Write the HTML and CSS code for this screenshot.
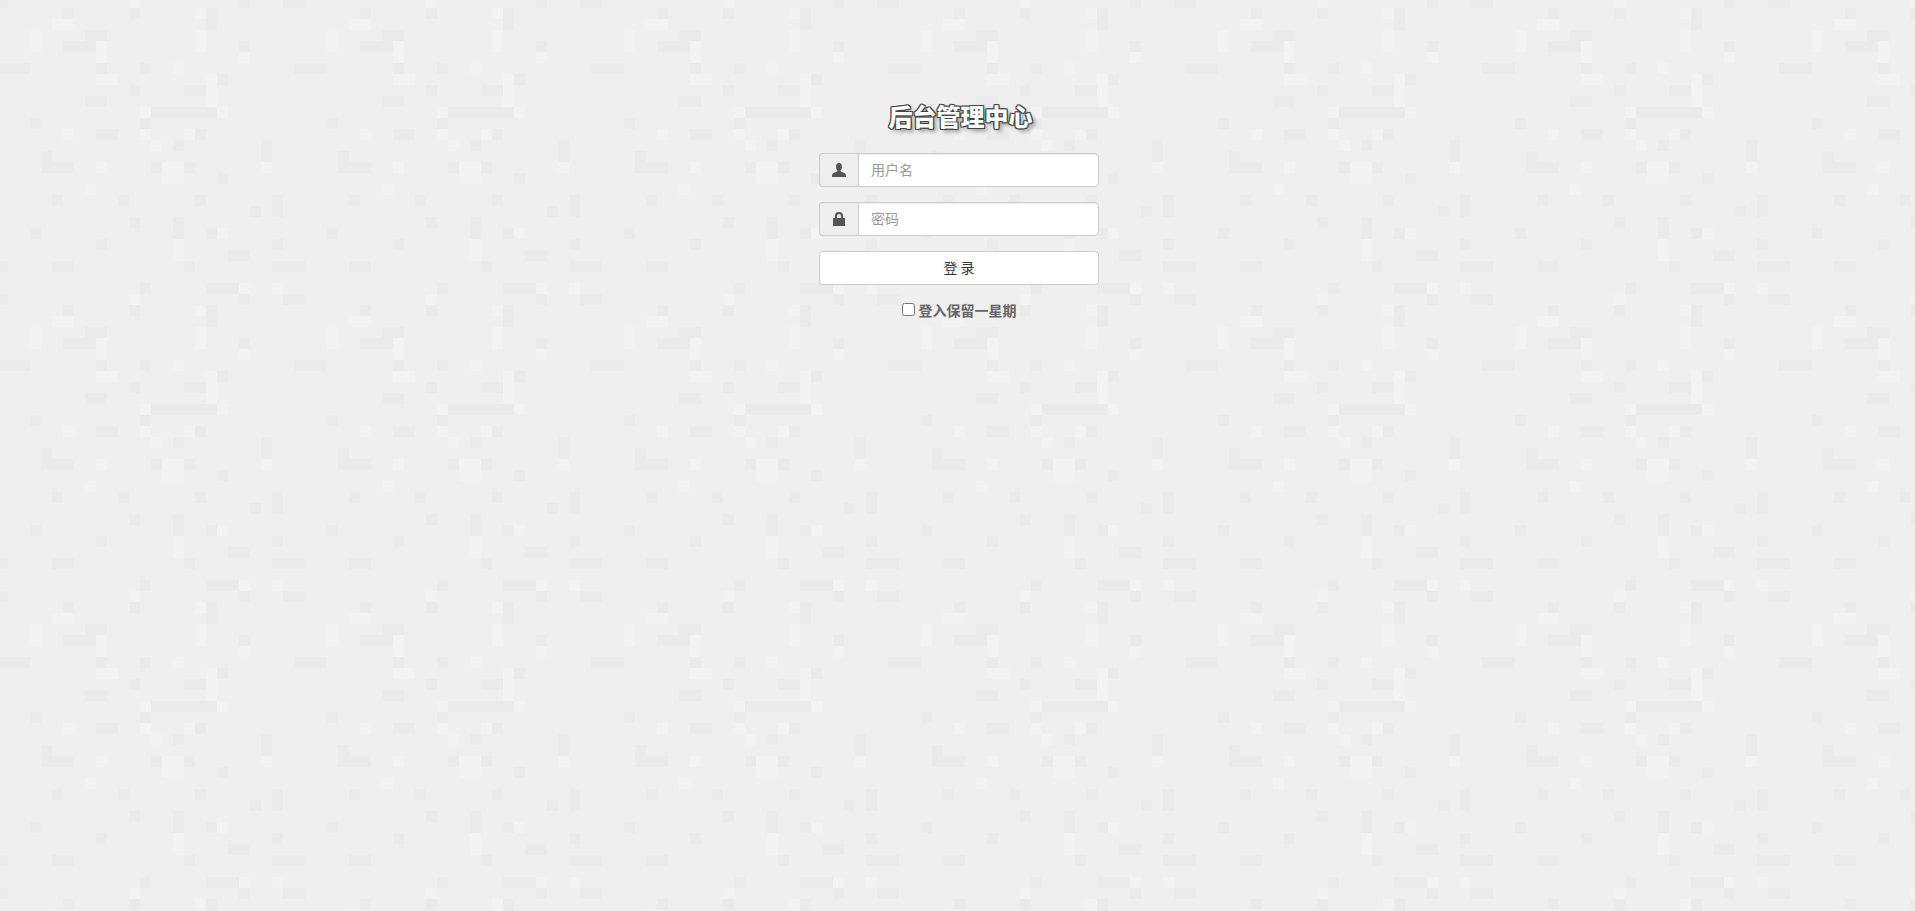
FILE: index.html
```html
<!DOCTYPE html>
<html lang="zh-CN">

<head>
    <meta charset="UTF-8" />
    <meta name="viewport" content="width=device-width, initial-scale=1.0" />
    <title>后台管理中心</title>
    <link rel="stylesheet" href="styles.css">
</head>

<body>
    <div class="login-box">
        <h1 class="login-title">后台管理中心</h1>
        <form>
            <div class="input-group">
                <span class="input-addon">
                    <svg class="glyph" viewBox="0 0 14 14">
                        <path d="M7 0C5 0 4 1.4 4 3.4c0 1.7.6 3.1 1.4 4 .3.4.2.9-.3 1.1C3.2 9.4 0 10 0 12.5V14h14v-1.5c0-2.5-3.2-3.1-5.1-4-.5-.2-.6-.7-.3-1.1.8-.9 1.4-2.3 1.4-4C10 1.4 9 0 7 0z" />
                    </svg>
                </span>
                <input type="text" class="form-control" placeholder="用户名" />
            </div>
            <div class="input-group">
                <span class="input-addon">
                    <svg class="glyph" viewBox="0 0 14 14">
                        <path fill-rule="evenodd" d="M3 6V4a4 4 0 0 1 8 0v2h1.5a.5.5 0 0 1 .5.5V14H1V6.5a.5.5 0 0 1 .5-.5zM5 6h4V4a2 2 0 0 0-4 0z" />
                    </svg>
                </span>
                <input type="password" class="form-control" placeholder="密码" />
            </div>
            <button type="button" class="login-btn">登 录</button>
            <div class="remember">
                <label><input type="checkbox" /> 登入保留一星期</label>
            </div>
        </form>
    </div>
</body>

</html>
```

FILE: styles.css
```css
* {
    box-sizing: border-box;
}

body {
    margin: 0;
    min-height: 911px;
    padding-left: 3px;
    font-family: "Liberation Sans", "Noto Sans CJK SC", sans-serif;
    font-size: 14px;
    line-height: 20px;
    color: #333;
    background-color: #efefef;
    background-position: 8px 8px;
    background-image: url("data:image/svg+xml,%3Csvg xmlns='http://www.w3.org/2000/svg' width='297' height='297'%3E%3Cpath fill='%23eaeaea' d='M55 0h11v11h-11zM121 0h11v11h-11zM198 0h11v22h-11zM231 286h11v11h-11zM77 22h22v11h-22zM55 33h33v11h-33zM231 33h11v11h-11zM88 55h11v11h-11zM132 55h11v11h-11zM286 55h11v11h-11zM0 55h22v11h-22zM209 66h11v11h-11zM121 77h11v11h-11zM176 77h22v11h-22zM77 88h22v11h-22zM143 99h66v11h-66zM22 110h11v11h-11zM132 110h11v11h-11zM88 121h22v11h-22zM187 121h11v11h-11zM165 132h11v11h-11zM253 132h11v22h-11zM33 143h11v11h-11zM33 154h33v11h-33zM143 154h11v11h-11zM176 154h11v11h-11zM209 165h11v11h-11zM44 187h11v11h-11zM110 187h11v11h-11zM187 187h11v11h-11zM242 198h11v11h-11zM264 187h11v22h-11zM165 209h11v22h-11zM121 209h11v11h-11zM22 220h11v11h-11zM198 220h11v11h-11zM88 231h11v11h-11zM264 231h11v11h-11zM220 242h22v11h-22zM44 253h22v11h-22zM176 253h11v11h-11zM264 253h33v11h-33zM198 275h33v11h-33zM132 275h11v11h-11zM275 286h22v11h-22z'/%3E%3Cpath fill='%23f3f3f3' d='M121 286h11v11h-11zM187 0h11v11h-11zM44 11h22v11h-22zM22 22h11v22h-11zM187 22h11v22h-11zM88 33h11v22h-11zM231 44h11v11h-11zM165 55h11v11h-11zM88 66h22v11h-22zM198 66h11v33h-11zM209 99h11v11h-11zM132 99h11v11h-11zM55 121h11v11h-11zM132 121h11v11h-11zM176 121h11v11h-11zM143 132h11v11h-11zM88 154h11v11h-11zM154 154h22v22h-22zM253 154h11v11h-11zM77 176h11v11h-11zM209 220h11v11h-11zM165 231h11v22h-11zM264 275h11v11h-11zM231 275h11v11h-11z'/%3E%3C/svg%3E");
}

.login-box {
    width: 280px;
    margin: 0 auto;
    padding-top: 100px;
}

.login-title {
    margin: 0 0 22px;
    padding-left: 3px;
    font-family: "Noto Sans CJK SC", sans-serif;
    font-size: 24px;
    font-weight: 900;
    line-height: 31px;
    text-align: center;
    color: #fff;
    text-shadow: 1px 0 0 #444, -1px 0 0 #444, 0 1px 0 #444, 0 -1px 0 #444,
        1px 1px 0 #444, -1px -1px 0 #444, 1px -1px 0 #444, -1px 1px 0 #444,
        3px 3px 4px rgba(0, 0, 0, 0.4);
}

.input-group {
    display: flex;
    height: 34px;
    margin-bottom: 15px;
}

.input-addon {
    display: flex;
    justify-content: center;
    align-items: center;
    width: 39px;
    background: #eee;
    border: 1px solid #ccc;
    border-right: 0;
    border-radius: 4px 0 0 4px;
}

.glyph {
    width: 14px;
    height: 14px;
    fill: #555;
}

.form-control {
    flex: 1;
    min-width: 0;
    padding: 6px 12px 8px;
    font: inherit;
    font-family: "Noto Sans CJK SC", sans-serif;
    color: #555;
    background: #fff;
    border: 1px solid #ccc;
    border-radius: 0 4px 4px 0;
    box-shadow: inset 0 1px 1px rgba(0, 0, 0, 0.075);
}

.form-control::placeholder {
    color: #999;
}

.login-btn {
    display: block;
    width: 100%;
    height: 34px;
    padding: 0 0 2px;
    font: inherit;
    font-family: "Noto Sans CJK SC", sans-serif;
    color: #333;
    background: #fff;
    border: 1px solid #ccc;
    border-radius: 4px;
}

.remember {
    margin-top: 15px;
    padding-left: 1px;
    text-align: center;
}

.remember label {
    font-family: "Noto Sans CJK SC", sans-serif;
    font-weight: 700;
    color: #666;
}

.remember input {
    margin: 0;
    vertical-align: 0;
}
```
